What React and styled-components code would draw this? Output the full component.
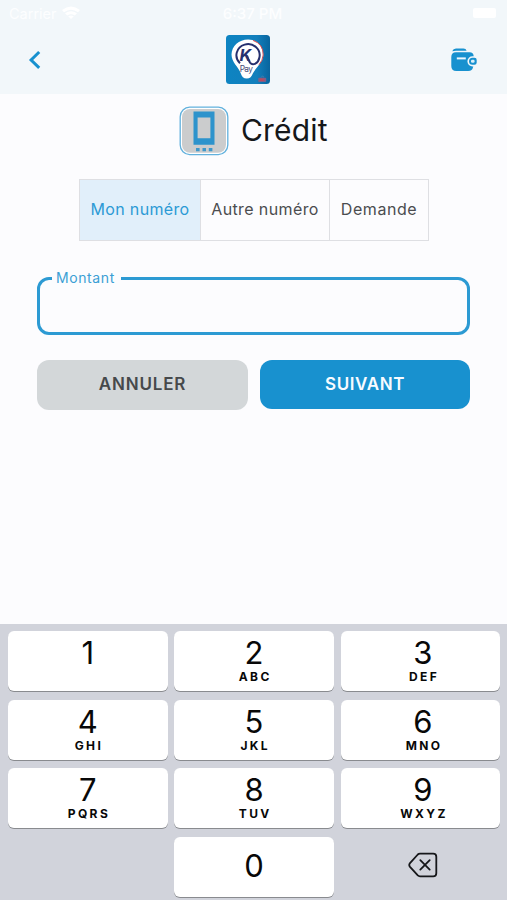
import React from "react";
import styled, { createGlobalStyle } from "styled-components";

const BLUE = "#1891cf";

const GlobalStyle = createGlobalStyle`
  * { box-sizing: border-box; }
  body { margin: 0; background: #fcfcfe; }
  button { margin: 0; padding: 0; border: 0; font-family: inherit; background: none; }
`;

const Screen = styled.div`
  width: 507px;
  height: 900px;
  display: flex;
  flex-direction: column;
  overflow: hidden;
  background: #fcfcfe;
  font-family: Inter, "Liberation Sans", sans-serif;
`;

const Header = styled.header`
  height: 94px;
  flex: none;
  background: #f2f7fa;
`;

const StatusBar = styled.div`
  height: 28px;
  padding: 0 11px 0 9px;
  display: grid;
  grid-template-columns: 1fr auto 1fr;
  align-items: center;
  color: #fdfeff;
  font-size: 15px;
  line-height: 28px;
`;

const StatusGroup = styled.div`
  display: flex;
  align-items: center;
  gap: 5px;
  justify-content: ${(p) => (p.$end ? "flex-end" : "flex-start")};
`;

const Carrier = styled.span`
  font-size: 14.5px;
`;

const Clock = styled.span`
  font-weight: 500;
  letter-spacing: 0;
`;

const Battery = styled.span`
  width: 23px;
  height: 10px;
  border-radius: 2px;
  background: #fff;
  margin-top: -2px;
`;

const NavBar = styled.nav`
  height: 66px;
  padding: 7px 30px 0 28px;
  display: grid;
  grid-template-columns: 1fr 44px 1fr;
  align-items: start;
`;

const NavButton = styled.button`
  height: 49px;
  display: flex;
  align-items: center;
  justify-content: ${(p) => (p.$end ? "flex-end" : "flex-start")};
`;

const NavTitle = styled.div`
  width: 44px;
  height: 49px;
  margin-left: -4.5px;
`;

const Drawing = styled.svg`
  display: block;
  flex: none;
`;

const Content = styled.main`
  flex: 1;
  padding: 12px 37px 0;
`;

const TitleRow = styled.div`
  height: 50px;
  margin-left: 142px;
  display: flex;
  gap: 12px;
`;

const Title = styled.h1`
  margin: 0;
  font-size: 30px;
  line-height: 48px;
  font-weight: 400;
  letter-spacing: 0.2px;
  color: #15171a;
`;

const Tabs = styled.div`
  width: 350px;
  height: 62px;
  margin: 23px 0 0 42px;
  display: grid;
  grid-template-columns: 120px 129px 99px;
  border: 1px solid #dedfe3;
`;

const Tab = styled.button`
  height: 60px;
  padding-bottom: 2px;
  font-size: 16px;
  white-space: nowrap;
  letter-spacing: ${(p) => p.$spacing}px;
  color: ${(p) => (p.$active ? "#2c9ad5" : "#4b4c4f")};
  background: ${(p) => (p.$active ? "#e1effa" : "transparent")};
  & + & { border-left: 1px solid #dedfe3; }
`;

const Field = styled.fieldset`
  width: 433px;
  height: 66px;
  margin: 28px 0 0;
  padding: 0 0 0 12px;
  border: 3px solid #2c9ad3;
  border-radius: 12px;
`;

const FieldLabel = styled.legend`
  height: 18px;
  padding: 0 6px 0 4px;
  font-size: 14px;
  line-height: 18px;
  letter-spacing: 0.6px;
  color: #3b9fd5;
`;

const Actions = styled.div`
  display: flex;
  gap: 12px;
  margin-top: 25px;
`;

const ActionButton = styled.button`
  width: ${(p) => (p.$primary ? 210 : 211)}px;
  height: ${(p) => (p.$primary ? 49 : 50)}px;
  padding-bottom: ${(p) => (p.$primary ? 1 : 2)}px;
  border-radius: 12px;
  font-size: 17px;
  font-weight: 600;
  letter-spacing: ${(p) => (p.$primary ? 0.6 : 0.8)}px;
  color: ${(p) => (p.$primary ? "#f7fbff" : "#46494b")};
  background: ${(p) => (p.$primary ? BLUE : "#d3d7d9")};
`;

const Keypad = styled.div`
  height: 276px;
  flex: none;
  padding: 7px 7px 0 8px;
  display: grid;
  grid-template-columns: repeat(3, 159.5px);
  grid-auto-rows: 60px;
  gap: 8.6px 6.8px;
  background: #d1d3db;
`;

const Key = styled.button`
  display: flex;
  flex-direction: column;
  align-items: center;
  justify-content: ${(p) => (p.$centered ? "center" : "flex-start")};
  padding-top: ${(p) => (p.$centered ? 0 : 4)}px;
  padding-bottom: ${(p) => (p.$centered ? 3 : 0)}px;
  padding-left: ${(p) => (p.$last ? 5 : 0)}px;
  border-radius: 6px;
  background: #fff;
  box-shadow: 0 1px 0.5px #898b8f;
  color: #080808;
`;

const EraseKey = styled.button`
  display: flex;
  align-items: center;
  justify-content: center;
  padding-left: 6px;
  padding-bottom: 3px;
`;

const Digit = styled.span`
  font-size: 31px;
  line-height: 35px;
`;

const Letters = styled.span`
  padding-left: 2.4px;
  font-size: 12px;
  line-height: 13px;
  font-weight: 700;
  letter-spacing: 2.4px;
`;

const WifiIcon = () => (
  <Drawing width="18" height="16" viewBox="0 0 18 16" fill="#fff">
    <path d="M0 4Q9-3 18 4L16 6.3Q9 1 2 6.3Z" />
    <path d="M3 7.3Q9 3 15 7.3L12.8 9.4Q9 7 5.2 9.4Z" />
    <path d="M6.2 10.3Q9 8.6 11.8 10.3L9 13Z" />
  </Drawing>
);

const BackIcon = () => (
  <Drawing width="14" height="20" viewBox="0 0 14 20" fill="none">
    <path d="M11.2 2L3.1 10L11.2 17.8" stroke={BLUE} strokeWidth="3" />
  </Drawing>
);

const WalletIcon = () => (
  <Drawing width="26" height="24" viewBox="0 0 26 24">
    <path d="M1.2 3.2Q2.2.4 5 .4H12.5Q15 .4 15.6 2.8H5Q2.8 2.8 1.2 3.2Z" fill={BLUE} />
    <path d="M5 4.2H18.5Q22.5 4.2 22.7 8.2H21.5A5 5 0 0 0 21.5 18.4H22.3Q21.3 23 17.2 23H5.3Q.3 23 .3 18V9Q.3 4.2 5 4.2Z" fill={BLUE} />
    <path d="M5.8 10.4H14.8" stroke="#eef8ff" strokeWidth="2" />
    <path d="M21.5 9.8H23.5Q25.7 9.8 25.7 12V14.6Q25.7 16.8 23.5 16.8H21.5A3.4 3.4 0 0 1 21.5 9.8Z" fill={BLUE} />
    <rect x="20" y="11.8" width="3.6" height="3" rx="1.3" fill="#d9f0fa" />
  </Drawing>
);

const KPayLogo = () => (
  <Drawing width="44" height="49" viewBox="0 0 44 49">
    <defs>
      <linearGradient id="logoShade" x1="0" x2="1">
        <stop offset="0" stopColor="#0d84c2" />
        <stop offset=".7" stopColor="#127fbc" />
        <stop offset="1" stopColor="#09649d" />
      </linearGradient>
    </defs>
    <rect width="44" height="49" rx="3.5" fill="url(#logoShade)" />
    <path d="M22 4.5C30 4.3 37 10.5 37.3 19.5C37.5 27 31 31 26.8 38.5C25.7 41.5 24 43.5 20.8 43.5C17.5 43.5 15.7 41.5 14.8 38.5C12.5 31.5 5.5 27.5 5.5 19.5C5.7 11 13 4.6 22 4.5Z" fill="#fff" />
    <path d="M27 5.4Q37.4 9 37.2 20Q36.6 26 33 29.7" stroke="#d84b50" strokeWidth="1" fill="none" />
    <path d="M14 28.2A11.6 11.1 0 1 1 33.4 22.5C32.3 28.5 26.8 31.3 24 27.6Q22.2 25 21 20.5" stroke="#26306e" strokeWidth="2" fill="none" />
    <text x="13.5" y="26.4" fontFamily="Inter, sans-serif" fontSize="16.5" fontWeight="700" fontStyle="italic" fill="#26306e">K</text>
    <text x="13.8" y="36.6" fontFamily="Inter, sans-serif" fontSize="8.3" textLength="13" fill="#454a76">Pay</text>
    <path d="M35 42.5Q36.5 39.5 38 42.3" stroke="#5981aa" strokeWidth=".7" fill="none" />
    <rect x="32.2" y="42.7" width="8" height="4.2" rx="1" fill="#7d6089" />
    <rect x="33.8" y="43.4" width="4.4" height="2.7" rx=".6" fill="#b94a61" />
  </Drawing>
);

const CreditIcon = () => (
  <Drawing width="50" height="50" viewBox="0 0 50 50">
    <rect x="1.2" y="1.2" width="47.6" height="47.4" rx="9.5" fill="#fff" stroke="#62b1dd" strokeWidth="1.3" />
    <rect x="3" y="3" width="44" height="43.8" rx="8" fill="#cbcccd" />
    <path fillRule="evenodd" d="M14.5 5.5H35.5V38.8H14.5ZM18.6 11.5V32.3H31.4V11.5Z" fill="#2d93cc" />
    <path d="M17 42H20.6V45.3H17ZM23.5 42H27V45.3H23.5ZM29.8 42H33.4V45.3H29.8Z" fill="#3f98ca" />
  </Drawing>
);

const EraseIcon = () => (
  <Drawing width="30" height="26" viewBox="0 0 30 26" fill="none" stroke="#16171a" strokeWidth="1.8" strokeLinecap="round" strokeLinejoin="round">
    <path d="M12 1.6H25.2Q28.3 1.6 28.3 4.7V21.2Q28.3 24.3 25.2 24.3H12Q10.7 24.3 9.8 23.4L2 14.8Q.5 13 2 11.2L9.8 2.5Q10.7 1.6 12 1.6Z" />
    <path d="M12.3 8.2L21.7 17.6M21.7 8.2L12.3 17.6" />
  </Drawing>
);

const keys = [
  ["1", ""], ["2", "ABC"], ["3", "DEF"],
  ["4", "GHI"], ["5", "JKL"], ["6", "MNO"],
  ["7", "PQRS"], ["8", "TUV"], ["9", "WXYZ"],
];

export default function App() {
  return (
    <Screen>
      <GlobalStyle />
      <Header>
        <StatusBar>
          <StatusGroup><Carrier>Carrier</Carrier><WifiIcon /></StatusGroup>
          <Clock>6:37 PM</Clock>
          <StatusGroup $end><Battery /></StatusGroup>
        </StatusBar>
        <NavBar>
          <NavButton aria-label="Retour"><BackIcon /></NavButton>
          <NavTitle><KPayLogo /></NavTitle>
          <NavButton $end aria-label="Portefeuille"><WalletIcon /></NavButton>
        </NavBar>
      </Header>
      <Content>
        <TitleRow>
          <CreditIcon />
          <Title>Crédit</Title>
        </TitleRow>
        <Tabs>
          <Tab $active $spacing={0.35}>Mon numéro</Tab>
          <Tab $spacing={0.38}>Autre numéro</Tab>
          <Tab $spacing={0.55}>Demande</Tab>
        </Tabs>
        <Field>
          <FieldLabel>Montant</FieldLabel>
        </Field>
        <Actions>
          <ActionButton>ANNULER</ActionButton>
          <ActionButton $primary>SUIVANT</ActionButton>
        </Actions>
      </Content>
      <Keypad>
        {keys.map(([digit, letters], i) => (
          <Key key={digit} $last={i % 3 === 2}>
            <Digit>{digit}</Digit>
            {letters && <Letters>{letters}</Letters>}
          </Key>
        ))}
        <span />
        <Key $centered><Digit>0</Digit></Key>
        <EraseKey aria-label="Effacer"><EraseIcon /></EraseKey>
      </Keypad>
    </Screen>
  );
}
